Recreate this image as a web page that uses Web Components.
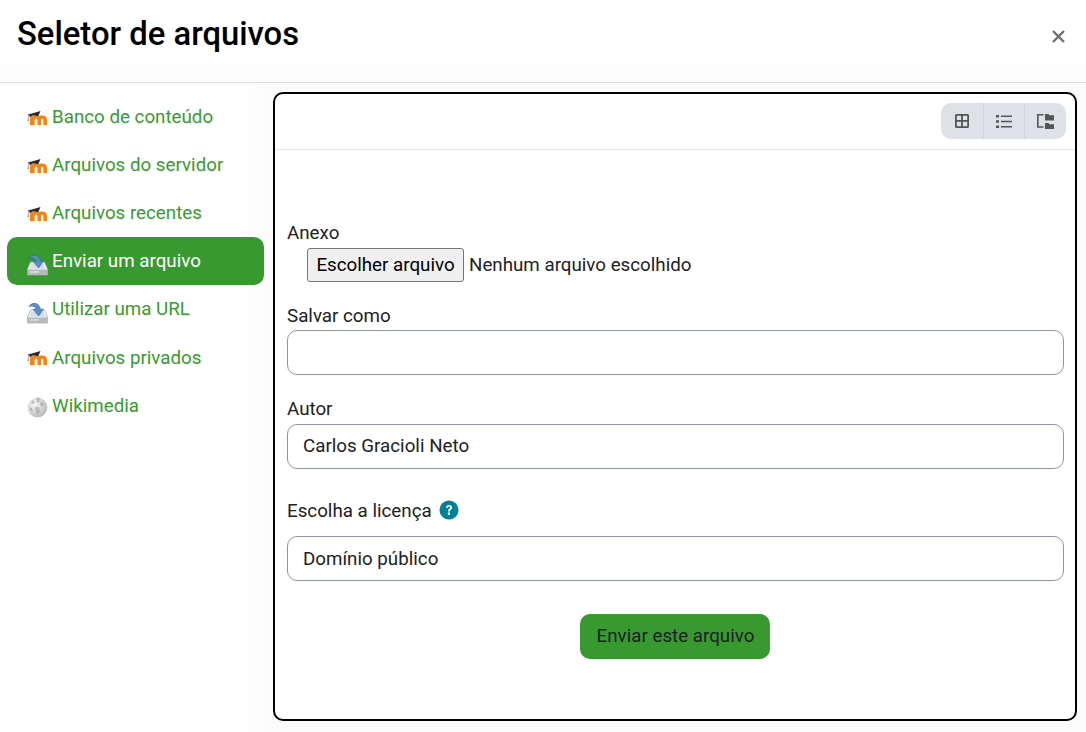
<!DOCTYPE html>
<html lang="pt-BR"><head><meta charset="utf-8"><title>Seletor de arquivos</title>
<style>
html,body{margin:0;padding:0;background:#fff;height:100%;overflow:hidden}
body{font-family:Roboto,"Liberation Sans",sans-serif;color:#1d2125}
</style></head><body>
<file-picker>
  <picker-header slot="header">Seletor de arquivos</picker-header>
  <repo-item slot="nav" icon="moodle">Banco de conteúdo</repo-item>
  <repo-item slot="nav" icon="moodle">Arquivos do servidor</repo-item>
  <repo-item slot="nav" icon="moodle">Arquivos recentes</repo-item>
  <repo-item slot="nav" icon="disk" active>Enviar um arquivo</repo-item>
  <repo-item slot="nav" icon="disk">Utilizar uma URL</repo-item>
  <repo-item slot="nav" icon="moodle">Arquivos privados</repo-item>
  <repo-item slot="nav" icon="wiki">Wikimedia</repo-item>
  <view-toolbar slot="toolbar"></view-toolbar>
  <upload-form slot="form"></upload-form>
</file-picker>
<script>
const MOODLE=`<svg viewBox="0 0 21 21" width="21" height="21"><path d="M3 14V8.300C3 6 4.600 4.400 6.800 4.400c1.500 0 2.600.6 3.400 1.600.8-1 1.900-1.600 3.500-1.600h1.500C18.200 4.400 20 6 20 8.600V14h-3.600V8.900c0-.8-.4-1.200-1.200-1.200-.8 0-1.200.4-1.200 1.200V14h-3.600V8.900c0-.8-.4-1.200-1.200-1.200-.8 0-1.600.4-1.600 1.200V14z" fill="#f98012"/><path d="M.3 3.800 13.500 0l-1.600 3.700-1.300 2.100C9 4.600 7 4.300 5 4.800L2.800 6.600l-.3-1.800z" fill="#2b2b2b"/><path d="M.9 4.200V8L.2 9.800h1.700L1.400 8V4.200z" fill="#6d6d6d"/></svg>`;
const DISK=`<svg viewBox="0 0 21 21" width="21" height="21"><path d="M3.500 8h14l3 7v6H.5v-6z" fill="#eef1f3" stroke="#a3a9ad" stroke-width=".7"/><path d="M4.500 10h12l1.800 4.800H2.700z" fill="#d6dee5"/><path d="M.8 15.500h19.400v5.500H.8z" fill="#b5b9bb"/><path d="M3 17.200h9v1.600H3z" fill="#dcdedf"/><path d="M2 4.500C4 1.400 7.800.4 10.800 2.400c1.400 1 2.200 2.600 2.500 4.800h3.200l-5 6.800-5.500-6.800h3.200c-.3-1.200-.9-2-1.800-2.500-1.800-.9-3.500-.6-5.400-.2z" fill="#5a8fc6" stroke="#2f6296" stroke-width=".6"/></svg>`;
const WIKI=`<svg viewBox="0 0 21 21" width="21" height="21"><defs><radialGradient id="w" cx=".35" cy=".35" r=".8"><stop offset="0" stop-color="#f8f8f8"/><stop offset="1" stop-color="#b0b0b0"/></radialGradient></defs><circle cx="10.500" cy="11.500" r="9.800" fill="url(#w)"/><path d="M9.500 1.500h3l-.5 5-2-.5zM5.500 4 8 6.500 6 8.500 4 6.500zM13.500 6l3.500 1.500-1 3-3-1.200zM8 10.500l4 1 1 4-3 3-1.500-4zM2.500 11l2.500 1 .8 3.500-2.300-1z" fill="#8a8a8a" opacity=".45"/></svg>`;
const ICONS={moodle:MOODLE,disk:DISK,wiki:WIKI};

function def(name,css,html,init){
  customElements.define(name,class extends HTMLElement{
    constructor(){super();const r=this.attachShadow({mode:'open'});
      r.innerHTML=`<style>${css}</style>${html}`;}
    connectedCallback(){init&&init.call(this,this.shadowRoot);}
  });
}

def('file-picker',`
:host{display:grid;grid-template-columns:273px 804px;grid-template-rows:83px 638px;width:1086px;height:732px;box-sizing:border-box;
  background:linear-gradient(90deg,#fff 0,#fff 240px,#fbfbfb 273px)}
.h{grid-column:1/3;width:1086px}
nav{padding:10px 9px 0 7px;display:flex;flex-direction:column}
main{margin-top:9px;border:2px solid #000;border-radius:10px;background:#fff;box-sizing:border-box;display:flex;flex-direction:column;height:629px}
`,`<div class="h"><slot name="header"></slot></div>
<nav><slot name="nav"></slot></nav>
<main><slot name="toolbar"></slot><slot name="form"></slot></main>`);

def('picker-header',`
:host{display:flex;box-sizing:border-box;height:83px;background:linear-gradient(#fff 50px,#fcfcfc);border-bottom:1px solid #dee2e6;justify-content:space-between;padding:14px 20px 0 17px}
h1{margin:0;font:500 32.800px/40px Roboto,sans-serif;color:#000;white-space:nowrap}
svg{margin-top:15px}
`,`<h1><slot></slot></h1><svg width="15" height="15" viewBox="0 0 15 15"><path d="M2 2l11 11M13 2 2 13" stroke="#6f6f6f" stroke-width="2.400" fill="none"/></svg>`);

def('repo-item',`
:host{display:flex;align-items:center;height:48.100px;box-sizing:border-box;padding-left:20px;border-radius:10px;color:#399a2f;font-size:18.750px;white-space:nowrap;flex:none}
:host([active]){background:#37992f;color:#fff}
.i{width:21px;height:21px;margin-right:4px;display:block;flex:none}
.i svg{display:block;overflow:visible}
.moodle{transform:translateY(4px)}
.disk{transform:translateY(3px)}
.wiki{transform:translateY(1px)}
`,`<span class="i"></span><span class="t"><slot></slot></span>`,function(r){const n=this.getAttribute('icon'),i=r.querySelector('.i');i.innerHTML=ICONS[n]||'';i.classList.add(n);});

def('view-toolbar',`
:host{display:flex;justify-content:flex-end;box-sizing:border-box;height:56px;border-bottom:1px solid #e4e6e8;padding:9px 9px 0 0}
.g{display:flex;height:36px;background:#dee2e6;border-radius:10px;overflow:hidden}
.b{display:flex;align-items:center;justify-content:center;height:36px;width:41.670px;border-left:1px solid #ced4da;box-sizing:border-box}
.b:first-child{border-left:0}
svg{display:block}
`,`<div class="g">
<div class="b"><svg width="14" height="14" viewBox="0 0 14 14"><path d="M1.500 0h11A1.500 1.500 0 0 1 14 1.500v11a1.500 1.500 0 0 1-1.500 1.500h-11A1.500 1.500 0 0 1 0 12.500v-11A1.500 1.500 0 0 1 1.500 0zM1.800 1.800V6h4.300V1.800zm6.100 0V6h4.300V1.800zM1.800 7.800v4.400h4.300V7.800zm6.100 0v4.400h4.300V7.800z" fill="#555"/></svg></div>
<div class="b"><svg width="16" height="13" viewBox="0 0 16 13"><path d="M0 0h3v2.500H0zM0 5.200h3v2.600H0zM0 10.500h3V13H0zM5 .5h11V2H5zM5 5.800h11v1.500H5zM5 11h11v1.500H5z" fill="#555"/></svg></div>
<div class="b"><svg width="18" height="15" viewBox="0 0 18 15"><path d="M0 0h6.500v1.500H1.600v10.700h4.900v1.500H0z" fill="#555"/><path d="M8 0h3.500l1 1.300H17V6.500H8zM8 9h3.500l1 1.200H17V15H8z" fill="#555"/></svg></div>
</div>`);

def('form-row',`
:host{display:block;margin-bottom:var(--mb,0)}
label{display:flex;align-items:center;gap:7px;font-size:18.750px;line-height:24px;height:24px;color:#1d2125}
`,`<label><slot name="label"></slot></label><slot></slot>`);

def('text-box',`
:host{display:flex;align-items:center;box-sizing:border-box;height:45px;border:1px solid #8f959e;border-radius:10px;padding:0 15px;font-size:18.750px;color:#1d2125;background:#fff}
`,`<slot></slot>`);

def('help-icon',`:host{display:inline-flex;margin-top:-2px}`,`<svg width="20" height="20" viewBox="0 0 20 20"><circle cx="10" cy="10" r="9.500" fill="#008196"/><path d="M7 7.800C7 6 8.300 5 10.100 5c1.800 0 3.100 1 3.100 2.600 0 2.200-2.300 2-2.300 3.800H9c0-2.800 2.100-2.500 2.100-3.800 0-.6-.4-1-1-1-.7 0-1.100.5-1.200 1.200zM8.900 12.600h2.100v2.200H8.900z" fill="#fff"/></svg>`);

def('upload-form',`
:host{display:block;box-sizing:border-box;padding:71px 11px 0 12px;font-size:18.750px}
.file{display:flex;align-items:center;margin-left:20px;margin-top:3px;height:34px;margin-bottom:22px}
.btn{box-sizing:border-box;height:34px;width:157px;display:flex;align-items:center;justify-content:center;background:#efefef;border:1px solid #767676;border-radius:3px;color:#000;font-size:18.750px;white-space:nowrap}
.fn{margin-left:5px;color:#1d2125;white-space:nowrap}
form-row.a{--mb:22px}
.foot{display:flex;justify-content:center;margin-top:33px;padding-right:2px}
.send{display:flex;align-items:center;justify-content:center;box-sizing:border-box;width:190px;height:45px;padding:0 0 2px 2px;border-radius:10px;background:#37992f;color:#1d2125;font-size:18.750px}
`,`
<form-row><span slot="label">Anexo</span>
  <div class="file"><span class="btn">Escolher arquivo</span><span class="fn">Nenhum arquivo escolhido</span></div></form-row>
<form-row class="a"><span slot="label">Salvar como</span><text-box style="margin-top:2px"></text-box></form-row>
<form-row class="a"><span slot="label">Autor</span><text-box style="margin-top:3px;padding-bottom:2px">Carlos Gracioli Neto</text-box></form-row>
<form-row style="margin-top:30px"><span slot="label">Escolha a licença</span><help-icon slot="label"></help-icon><text-box style="margin-top:13px">Domínio público</text-box></form-row>
<div class="foot"><span class="send">Enviar este arquivo</span></div>`);
</script>
</body></html>
